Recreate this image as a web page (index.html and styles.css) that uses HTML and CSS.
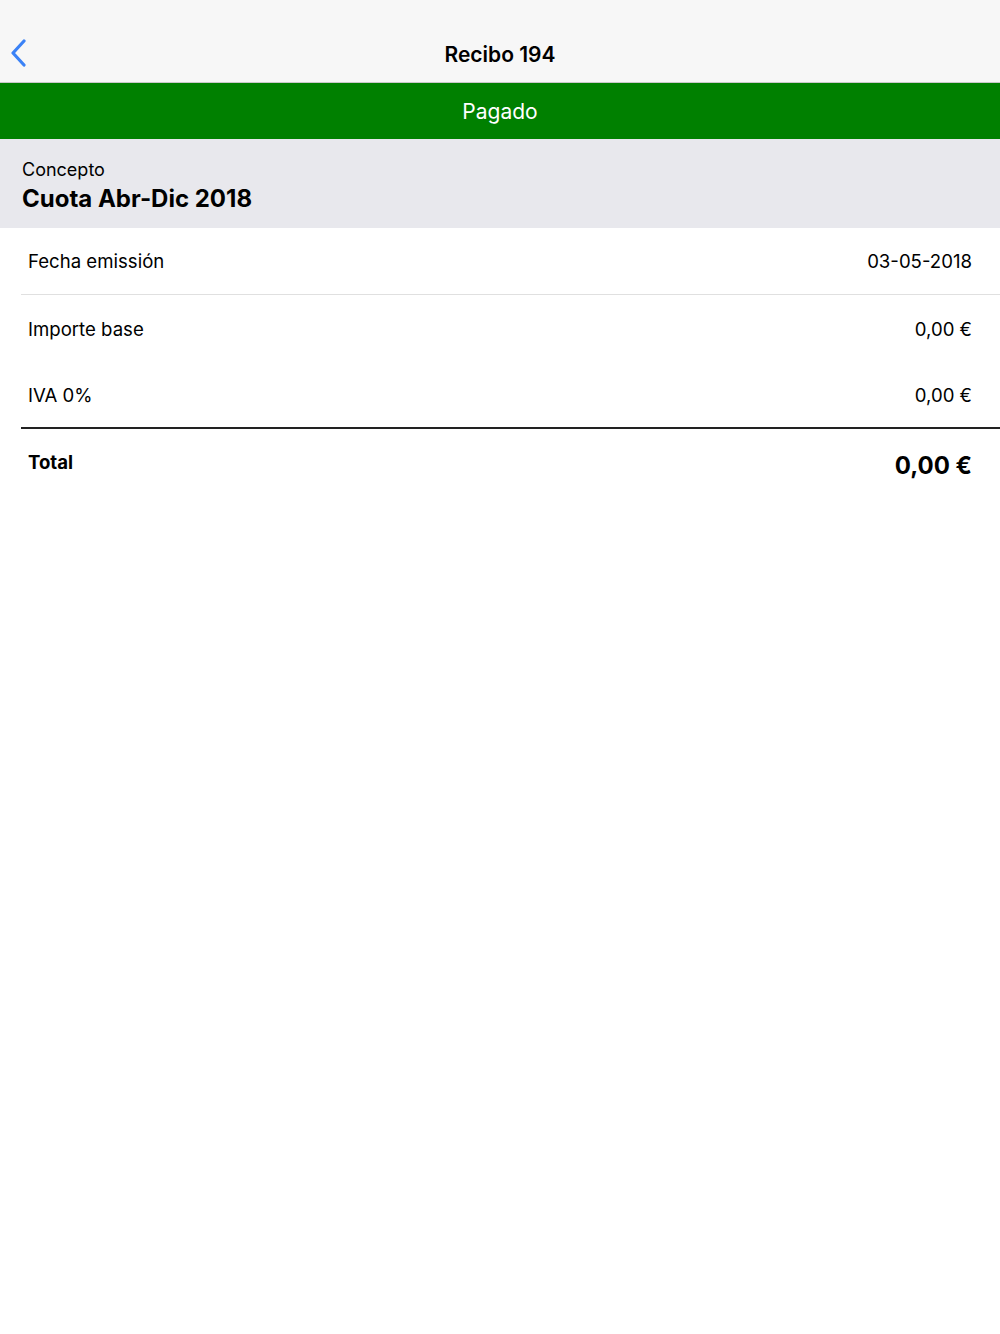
FILE: index.html
```html
<!DOCTYPE html>
<html lang="es">
<head>
<meta charset="utf-8">
<title>Recibo 194</title>
<link rel="stylesheet" href="styles.css">
</head>
<body>
<header class="navbar">
  <button class="back" aria-label="Atrás">
    <svg width="18" height="28" viewBox="0 0 18 28"><path d="M15 2 L4 14 L15 26" fill="none" stroke="#3b82f6" stroke-width="3.2" stroke-linecap="round" stroke-linejoin="round"/></svg>
  </button>
  <h1 class="title">Recibo 194</h1>
</header>
<div class="status">Pagado</div>
<section class="concept">
  <div class="concept-label">Concepto</div>
  <div class="concept-value">Cuota Abr-Dic 2018</div>
</section>
<section class="details">
  <div class="row row-sep">
    <span>Fecha emissión</span><span>03-05-2018</span>
  </div>
  <div class="row">
    <span>Importe base</span><span>0,00 €</span>
  </div>
  <div class="row row-total-sep">
    <span>IVA 0%</span><span>0,00 €</span>
  </div>
  <div class="row total">
    <span class="total-label">Total</span><span class="total-value">0,00 €</span>
  </div>
</section>
</body>
</html>
```

FILE: styles.css
```css
* { box-sizing: border-box; }
body {
  margin: 0;
  font-family: Inter, "Noto Sans", sans-serif;
  color: #000;
  background: #fff;
}
.navbar {
  position: relative;
  height: 83px;
  background: #f7f7f7;
  border-bottom: 1px solid #c8c8c8;
  display: flex;
  align-items: flex-end;
  justify-content: center;
  padding-bottom: 15px;
}
.back {
  position: absolute;
  left: 9px;
  top: 39px;
  border: 0;
  background: none;
  padding: 0;
  display: flex;
}
.title {
  margin: 0;
  font-size: 21px;
  font-weight: 600;
  letter-spacing: 0;
}
.status {
  height: 56px;
  background: #008000;
  color: #fff;
  display: flex;
  align-items: center;
  justify-content: center;
  font-size: 21px;
}
.concept {
  background: #e8e8ed;
  height: 89px;
  padding: 18px 22px 0;
}
.concept-label {
  font-size: 18px;
  line-height: 26px;
}
.concept-value {
  font-size: 24px;
  font-weight: 700;
  line-height: 32px;
}
.details {
  padding-left: 21px;
}
.row {
  display: flex;
  justify-content: space-between;
  align-items: center;
  height: 67px;
  padding: 0 28px 0 7px;
  font-size: 18.6px;
}
.row-sep { border-bottom: 1px solid #e0e0e0; height: 67px; }
.row-total-sep { border-bottom: 2px solid #222; }
.total { align-items: center; height: 70px; }
.total-label { font-weight: 700; font-size: 18.6px; margin-top: -4px; }
.total-value { font-weight: 700; font-size: 24px; margin-top: 2px; }
```
